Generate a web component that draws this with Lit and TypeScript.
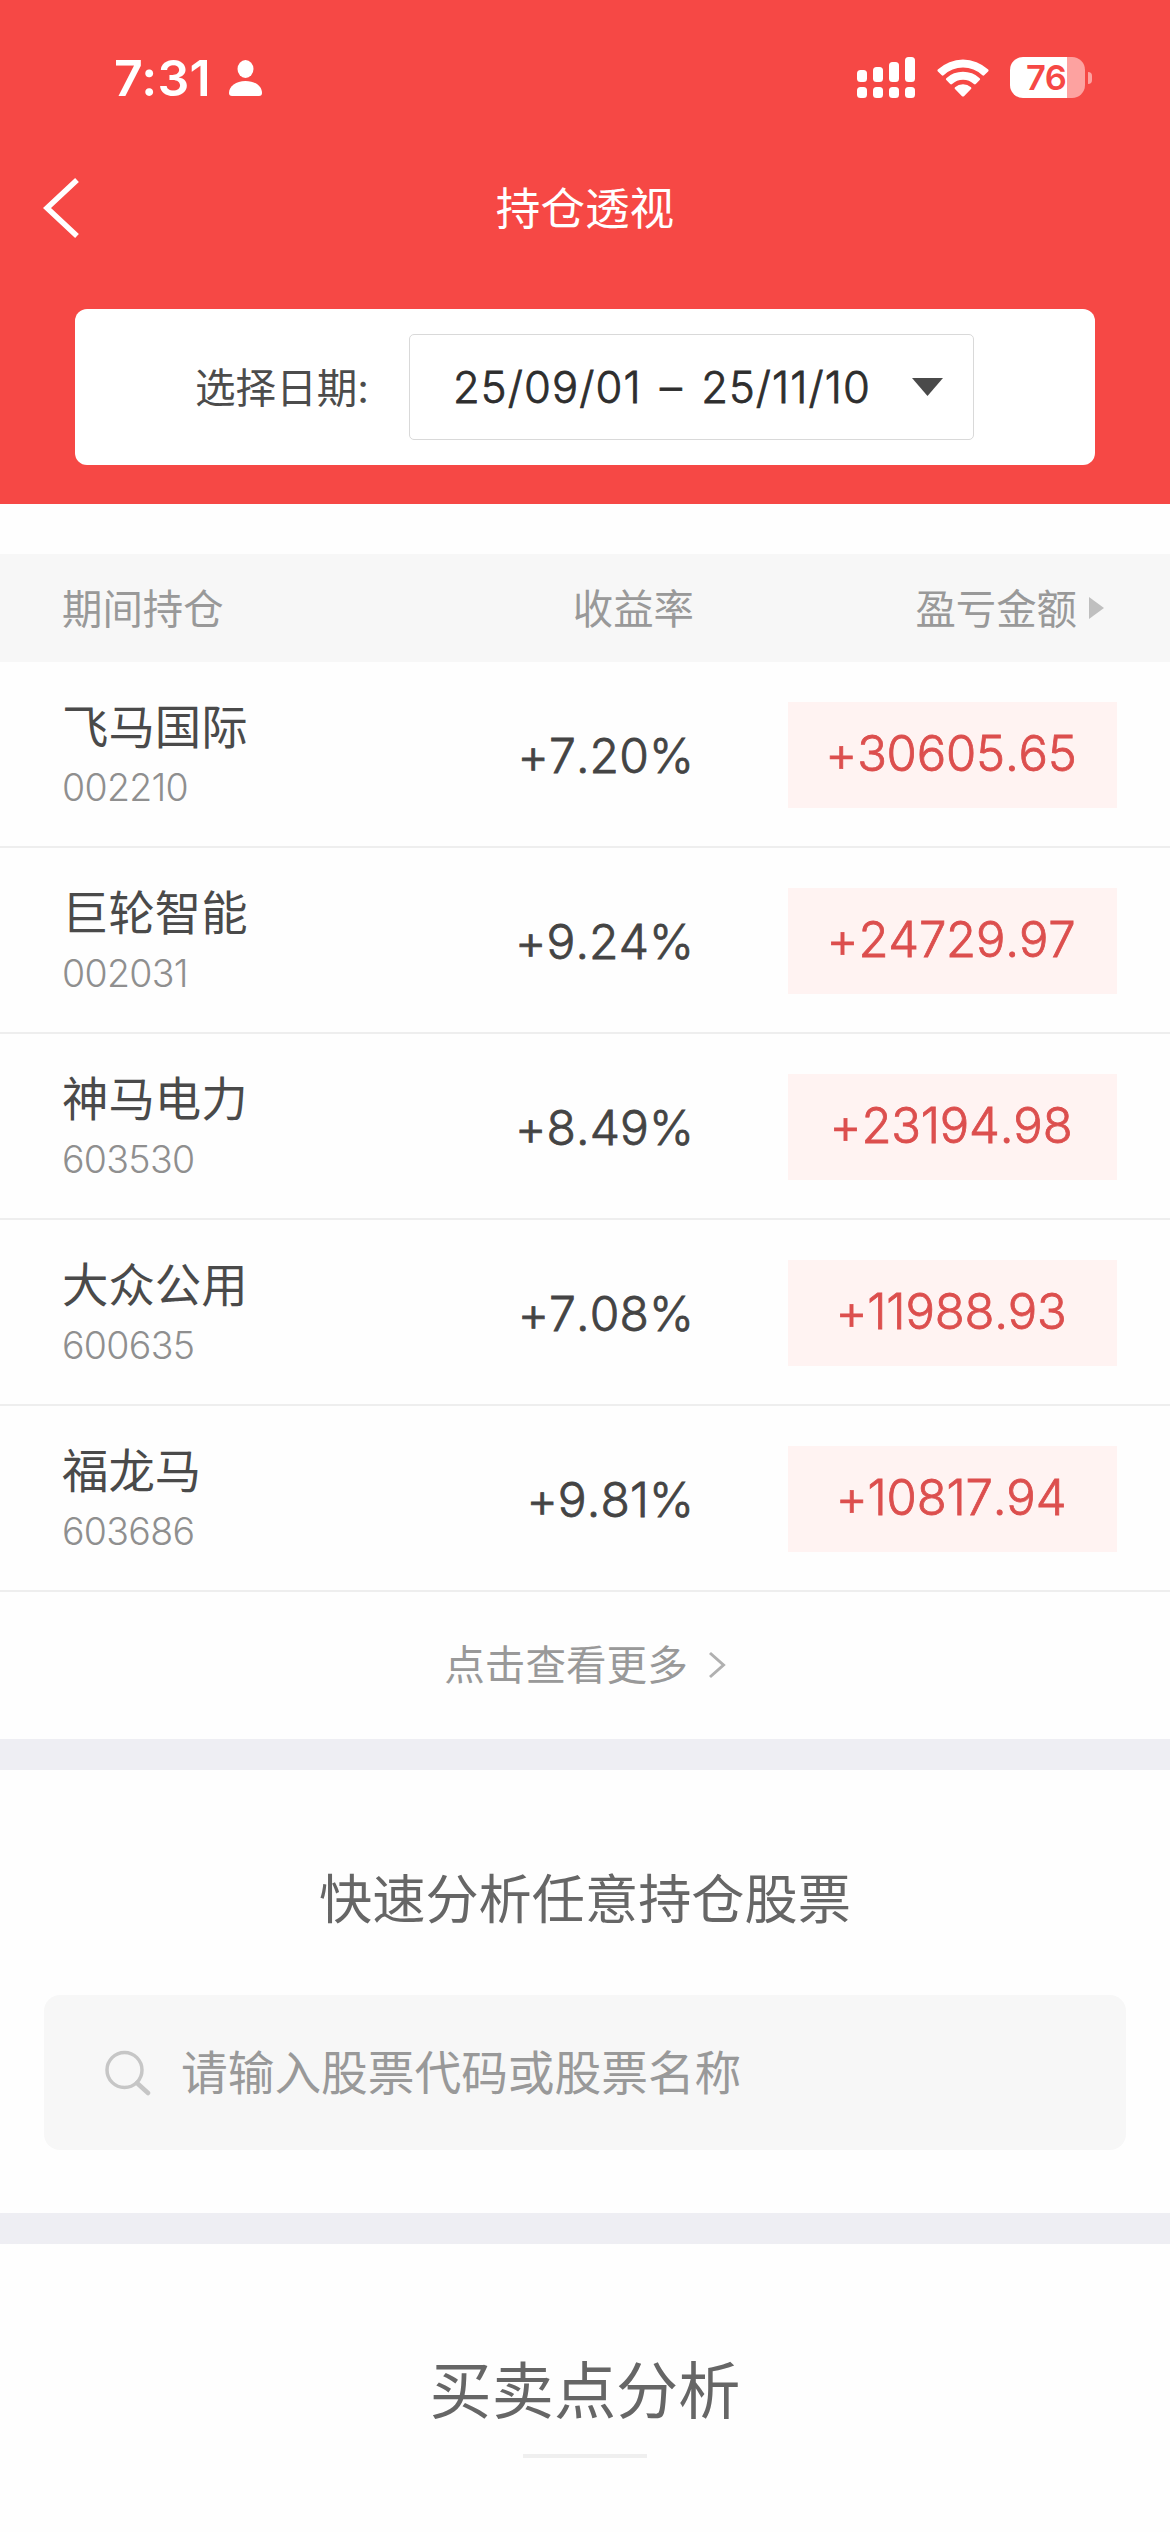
import { LitElement, html, css, svg } from "lit";
import { customElement, property } from "lit/decorators.js";

interface Holding {
  name: string;
  code: string;
  rate: string;
  amount: string;
}

const HOLDINGS: Holding[] = [
  { name: "飞马国际", code: "002210", rate: "+7.20%", amount: "+30605.65" },
  { name: "巨轮智能", code: "002031", rate: "+9.24%", amount: "+24729.97" },
  { name: "神马电力", code: "603530", rate: "+8.49%", amount: "+23194.98" },
  { name: "大众公用", code: "600635", rate: "+7.08%", amount: "+11988.93" },
  { name: "福龙马", code: "603686", rate: "+9.81%", amount: "+10817.94" },
];

// Cellular bars: x and top of the upper segment.
const BARS = [
  [0, 13],
  [16, 10],
  [32, 5],
  [48, 0],
];

@customElement("status-bar")
export class StatusBar extends LitElement {
  static styles = css`
    :host {
      display: flex;
      align-items: center;
      height: 156px;
      padding: 0 78px 0 114px;
      box-sizing: border-box;
      color: #fff;
    }
    .time {
      font-size: 50px;
      font-weight: 600;
      line-height: 60px;
      width: 115px;
      letter-spacing: 0.2px;
    }
    .person {
      display: block;
    }
    .right {
      display: flex;
      align-items: center;
      margin-left: auto;
      padding-bottom: 1px;
    }
    .wifi {
      margin: 0 21px 0 22px;
    }
    .battery {
      display: flex;
      align-items: center;
      gap: 3px;
    }
    .cell {
      width: 75px;
      height: 41px;
      border-radius: 13px;
      background: linear-gradient(to right, #fff 57px, #fda2a0 57px);
      color: #f64845;
      font-size: 34.5px;
      font-weight: 600;
      line-height: 41px;
      box-sizing: border-box;
      padding-left: 16px;
      letter-spacing: -0.6px;
    }
    .nub {
      width: 4px;
      height: 12px;
      border-radius: 0 5px 5px 0;
      background: #fda2a0;
    }
  `;
  render() {
    return html`
      <span class="time">7:31</span>
      <svg class="person" width="33" height="36" viewBox="0 0 33 36" fill="#fff">
        <ellipse cx="16.5" cy="9" rx="8" ry="9" />
        <path d="M3 36C1 36 0 35 0 33C0 26 7 21 16.5 21S33 26 33 33C33 35 32 36 30 36Z" />
      </svg>
      <div class="right">
        <svg width="58" height="41" viewBox="0 0 58 41" fill="#fff">
          ${BARS.map(
            ([x, y]) => svg`
              <rect x=${x} y=${y} width="10" height=${25 - y} rx="3.5" />
              <rect x=${x} y="30" width="10" height="11" rx="3.5" />`
          )}
        </svg>
        <svg class="wifi" width="52" height="40" viewBox="0 0 52 40" fill="#fff">
          <path d="M0.8 11.5A37 37 0 0 1 51.2 11.5Q52 12.5 51.1 13.4L47.2 17.3Q46.3 18 45.4 17.2A28.5 28.5 0 0 0 6.6 17.2Q5.7 18 4.8 17.3L0.9 13.4Q0 12.5 0.8 11.5Z" />
          <path d="M9.3 20.2A24.5 24.5 0 0 1 42.7 20.2Q43.6 21.2 42.7 22.1L38.8 26Q37.9 26.8 36.9 26A16 16 0 0 0 15.1 26Q14.1 26.8 13.2 26L9.3 22.1Q8.4 21.2 9.3 20.2Z" />
          <path d="M18 29.2A12 12 0 0 1 34 29.2Q34.9 30.2 34 31.1L27 38.2Q26 39 25 38.2L18 31.1Q17.1 30.2 18 29.2Z" />
        </svg>
        <div class="battery">
          <div class="cell">76</div>
          <div class="nub"></div>
        </div>
      </div>
    `;
  }
}

@customElement("holding-row")
export class HoldingRow extends LitElement {
  @property({ attribute: false }) item!: Holding;

  static styles = css`
    :host {
      display: grid;
      grid-template-columns: 330px 302px 1fr;
      align-items: center;
      height: 186px;
      padding: 0 53px 0 62px;
      box-sizing: border-box;
      border-bottom: 2px solid #eeeeee;
      font-kerning: none;
    }
    .name {
      font-size: 46.4px;
      line-height: 60px;
      color: #4a4a4a;
      margin-top: 5px;
    }
    .code {
      font-size: 37.5px;
      font-weight: 300;
      line-height: 56px;
      color: #8f8f8f;
      margin-top: 3px;
      letter-spacing: -0.7px;
    }
    .rate {
      font-size: 48px;
      font-weight: 300;
      -webkit-text-stroke: 0.8px currentColor;
      line-height: 60px;
      color: #444;
      text-align: right;
      margin-top: 3px;
      letter-spacing: 0.1px;
    }
    .amount {
      justify-self: end;
      width: 329px;
      height: 106px;
      line-height: 104px;
      box-sizing: border-box;
      padding-right: 3px;
      text-align: center;
      font-size: 49px;
      font-weight: 300;
      -webkit-text-stroke: 0.8px currentColor;
      letter-spacing: -0.2px;
      color: #dc4f4e;
      background: #fff3f2;
      margin-top: 1px;
    }
  `;
  render() {
    const { name, code, rate, amount } = this.item;
    return html`
      <div>
        <div class="name">${name}</div>
        <div class="code">${code}</div>
      </div>
      <div class="rate">${rate}</div>
      <div class="amount">${amount}</div>
    `;
  }
}

@customElement("app-root")
export class AppRoot extends LitElement {
  static styles = css`
    :host {
      display: block;
      width: 1170px;
      height: 2532px;
      overflow: hidden;
      background: #fefefe;
      font-family: Inter, "Noto Sans CJK SC", sans-serif;
      font-weight: 400;
    }
    svg {
      display: block;
    }
    .header {
      height: 504px;
      background: #f64845;
    }
    .nav {
      display: grid;
      grid-template-columns: 120px 1fr 120px;
      align-items: center;
      height: 104px;
      color: #fff;
    }
    .back {
      margin-left: 43px;
    }
    .title {
      padding-top: 1px;
      font-size: 44.6px;
      text-align: center;
      line-height: 60px;
    }
    .picker {
      display: flex;
      align-items: center;
      height: 156px;
      margin: 49px 75px 0;
      padding-left: 120px;
      box-sizing: border-box;
      border-radius: 12px;
      background: #fff;
    }
    .label {
      width: 214px;
      padding-bottom: 4px;
      font-size: 40.6px;
      color: #4c4c4c;
      white-space: nowrap;
    }
    .select {
      display: flex;
      align-items: center;
      justify-content: space-between;
      width: 565px;
      height: 106px;
      padding: 0 30px 0 43px;
      box-sizing: border-box;
      border: 1.5px solid #d9d9d9;
      border-radius: 5px;
      font-size: 43.5px;
      font-weight: 300;
      -webkit-text-stroke: 0.8px currentColor;
      font-kerning: none;
      font-feature-settings: "calt" 0;
      letter-spacing: 1.1px;
      word-spacing: 5px;
      color: #2e2e2e;
      white-space: nowrap;
    }
    .thead {
      display: grid;
      grid-template-columns: 330px 302px 1fr;
      align-items: center;
      height: 108px;
      margin-top: 50px;
      padding: 0 66px 0 62px;
      font-size: 40.4px;
      color: #999;
      background: #f7f7f7;
    }
    .thead span {
      padding-bottom: 4px;
    }
    .center {
      text-align: right;
    }
    .sort {
      display: flex;
      align-items: center;
      justify-content: flex-end;
      gap: 12px;
    }
    .more {
      display: flex;
      align-items: center;
      justify-content: center;
      gap: 20px;
      height: 147px;
      font-size: 40.6px;
      color: #999;
      padding-bottom: 2px;
      box-sizing: border-box;
    }
    .more span {
      padding-bottom: 4px;
    }
    .band {
      height: 31px;
      background: #eeeef3;
    }
    .subtitle {
      margin-top: 98px;
      height: 64px;
      line-height: 64px;
      text-align: center;
      font-size: 53.2px;
      color: #666;
    }
    .search {
      display: flex;
      align-items: center;
      gap: 30px;
      height: 155px;
      margin: 63px 44px 63px;
      padding-left: 61px;
      box-sizing: border-box;
      border-radius: 16px;
      background: #f7f7f7;
      font-size: 46.7px;
      color: #999;
    }
    .search span {
      padding-bottom: 6px;
    }
    .analysis {
      display: flex;
      flex-direction: column;
      align-items: center;
      padding-top: 108px;
      font-size: 62.2px;
      line-height: 80px;
      color: #666;
    }
    .rule {
      width: 124px;
      height: 4px;
      margin-top: 22px;
      background: #efefef;
    }
  `;

  render() {
    return html`
      <div class="header">
        <status-bar></status-bar>
        <div class="nav">
          <svg class="back" width="38" height="62" viewBox="0 0 38 62" fill="none" stroke="#fff" stroke-width="5.5">
            <path d="M34 3L4 31L34 59" />
          </svg>
          <div class="title">持仓透视</div>
        </div>
        <div class="picker">
          <span class="label">选择日期:</span>
          <div class="select">
            <span>25/09/01 – 25/11/10</span>
            <svg width="31" height="18" viewBox="0 0 31 18" fill="#4a4a4a"><path d="M0 0H31L15.500 18Z" /></svg>
          </div>
        </div>
      </div>
      <div class="thead">
        <span>期间持仓</span>
        <span class="center">收益率</span>
        <div class="sort">
          <span>盈亏金额</span>
          <svg width="15" height="22" viewBox="0 0 15 22" fill="#bfbfbf"><path d="M0 0L15 11L0 22Z" /></svg>
        </div>
      </div>
      ${HOLDINGS.map((h) => html`<holding-row .item=${h}></holding-row>`)}
      <div class="more">
        <span>点击查看更多</span>
        <svg width="18" height="28" viewBox="0 0 18 28" fill="none" stroke="#b0b0b0" stroke-width="3">
          <path d="M2 2L15.500 14L2 26" />
        </svg>
      </div>
      <div class="band"></div>
      <div class="subtitle">快速分析任意持仓股票</div>
      <div class="search">
        <svg width="46" height="46" viewBox="0 0 46 46" fill="none" stroke="#c6c6c6" stroke-linecap="round">
          <circle cx="19.500" cy="20" r="17.500" stroke-width="3.500" />
          <path d="M32 33L43 43" stroke-width="4.500" />
        </svg>
        <span>请输入股票代码或股票名称</span>
      </div>
      <div class="band"></div>
      <div class="analysis">
        <span>买卖点分析</span>
        <div class="rule"></div>
      </div>
    `;
  }
}
